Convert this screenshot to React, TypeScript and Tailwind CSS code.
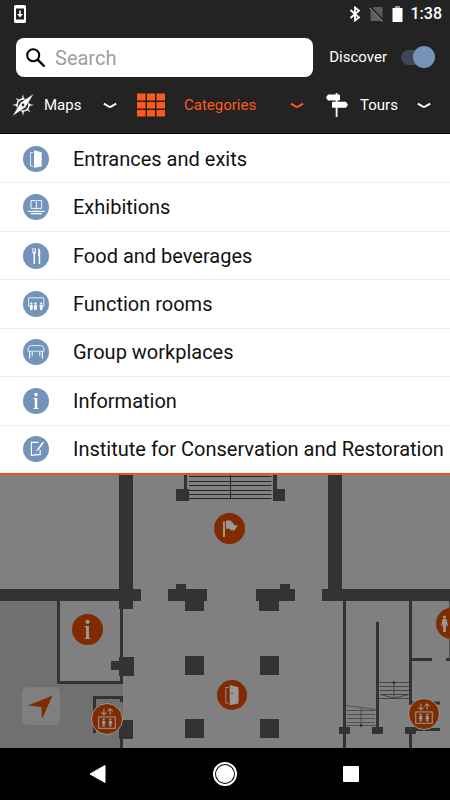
import React from "react";
import type { ReactNode } from "react";

const DoorShape = () => (
  <>
    <path d="M10 6.5H7.6V20H10" fill="none" stroke="currentColor" strokeWidth="0.8" />
    <path d="M11 4.3 18.7 6.3V20.4L11 21.8Z" fill="currentColor" />
  </>
);

const InfoShape = () => (
  <>
    <circle cx="13" cy="6.6" r="1.8" fill="currentColor" />
    <path d="M10.4 10H14.2V19.8L15.6 20.5V21H10.4V20.5L11.8 19.8V11.2L10.4 10.6Z" fill="currentColor" />
  </>
);

const LiftShape = () => (
  <g fill="none" stroke="currentColor" strokeWidth="1">
    <path d="M11.5 4.5V10.5M9 8 11.5 10.5 14 8M17.5 10.5V4.5M15 7 17.5 4.5 20 7" />
    <rect x="6.5" y="12.5" width="16" height="11" />
    <g fill="currentColor" stroke="none">
      <circle cx="11.3" cy="15" r="1.1" />
      <circle cx="17.7" cy="15" r="1.1" />
      <path d="M9.8 16.4H12.8V19.6H12.2V22H10.4V19.6H9.8ZM16.2 16.4H19.2V19.6H18.6V22H16.8V19.6H16.2Z" />
    </g>
  </g>
);

const categories: { label: string; icon: ReactNode }[] = [
  {
    label: "Entrances and exits",
    icon: <DoorShape />,
  },
  {
    label: "Exhibitions",
    icon: (
      <g fill="none" stroke="currentColor">
        <path d="M8 6.5H12L13.3 7.3 14.6 6.5H18.6V14.4H14.6L13.3 15.2 12 14.4H8ZM13.3 7.3V15" strokeWidth="0.9" />
        <path d="M5 17.4H21.6M7.8 19.6H18.8" strokeWidth="1.1" />
      </g>
    ),
  },
  {
    label: "Food and beverages",
    icon: (
      <g fill="currentColor">
        <path d="M9.4 5H10.1V9H10.8V5H11.5V9H12.2V5H12.9V9.5L12 11.4V20.4Q11.3 21.6 10.5 20.4V11.4L9.4 9.5Z" />
        <path d="M15.2 5.6Q17.2 5 17.2 8V20.6Q16.4 21.6 15.7 20.6V13H15.2Z" />
      </g>
    ),
  },
  {
    label: "Function rooms",
    icon: (
      <>
        <path d="M7 15H5.6V6.8H20.8V15H19.4" fill="none" stroke="currentColor" strokeWidth="0.8" />
        <g fill="currentColor">
          <circle cx="8.3" cy="12.6" r="1.2" />
          <circle cx="12.4" cy="12.6" r="1.2" />
          <circle cx="18.2" cy="12.6" r="1.2" />
          <path d="M6.6 14.2H10L9.4 19H7.2ZM10.7 14.2H14.1L13.5 19H11.3ZM16.5 14.2H19.9L19.3 19H17.1Z" />
        </g>
      </>
    ),
  },
  {
    label: "Group workplaces",
    icon: (
      <g fill="none" stroke="currentColor">
        <path d="M7.4 6.6H18.6Q19.6 6.6 20 7.6L21.2 11.2Q21.4 12.2 20.2 12.2H5.8Q4.6 12.2 4.8 11.2L6 7.6Q6.4 6.600 7.4 6.600Z" strokeWidth="0.8" />
        <path d="M6.6 12V19.5M9.2 13V16.8M16.8 13V16.8M19.4 12V19.5" strokeWidth="1.1" />
      </g>
    ),
  },
  {
    label: "Information",
    icon: <InfoShape />,
  },
  {
    label: "Institute for Conservation and Restoration",
    icon: (
      <g fill="none" stroke="currentColor">
        <path d="M15.5 6.4H8.4V19.4H11L12 18.6H17.2V14" strokeWidth="1.1" />
        <path d="M20.4 6 14.6 14" strokeWidth="1.6" />
        <path d="M14.8 13.4 13 15.4" strokeWidth="0.8" />
      </g>
    ),
  },
];

const Chevron = () => (
  <svg className="ml-auto h-2 w-3.5" viewBox="0 0 14 8" fill="none" stroke="currentColor" strokeWidth="1.9" aria-hidden="true">
    <path d="M.8 2.600 6 5.600Q7 6.100 8 5.600L13.200 2.600" />
  </svg>
);

function StatusBar() {
  return (
    <div className="flex h-7 items-center pr-2 pl-3.5 text-white">
      <svg className="h-[18px] w-3" viewBox="0 0 12 18" aria-hidden="true">
        <rect width="12" height="18" rx="1.5" fill="#fff" />
        <rect x="2" y="3.5" width="8" height="11" fill="#232323" />
        <path d="M5.2 5.5H6.8V9H9L6 12.5 3 9H5.2Z" fill="#fff" />
      </svg>
      <svg className="ml-auto h-4 w-3" viewBox="0 0 12 16" fill="none" stroke="currentColor" strokeWidth="1.8" aria-hidden="true">
        <path d="M1.500 4 10 11.500 6 14.500V1.500L10 4.500 1.500 12" />
      </svg>
      <svg className="ml-2 h-4 w-[15px]" viewBox="0 0 15 16" aria-hidden="true">
        <path d="M5 1H13.5V15H1.5V5Z" fill="#5d5d5d" />
        <path d="M.8.8 14.4 15" stroke="#232323" strokeWidth="2.6" />
        <path d="M.6 2 13.6 15.5" stroke="#777" strokeWidth="1.2" />
      </svg>
      <svg className="ml-2 h-4 w-[11px]" viewBox="0 0 11 16" aria-hidden="true">
        <path d="M3 0H8V2H10.5V16H.5V2H3Z" fill="#fff" />
        <path d="M3 0H8V2H3Z" fill="#999" />
      </svg>
      <span className="ml-2 text-base font-medium">1:38</span>
    </div>
  );
}

function Header() {
  return (
    <header className="border-b border-black bg-[#232323] text-white">
      <StatusBar />
      <div className="flex items-center pt-2.5 pr-[15px] pl-4">
        <label className="flex h-[39px] min-w-0 flex-1 items-center rounded-lg bg-white pl-2.5 text-black">
          <svg className="h-5 w-5 shrink-0" viewBox="0 0 20 20" fill="none" stroke="currentColor" strokeWidth="2" aria-hidden="true">
            <circle cx="7.2" cy="7.2" r="6" />
            <path d="M11.6 11.6 18.5 18.5" strokeWidth="2.4" />
          </svg>
          <input
            type="search"
            aria-label="Search"
            placeholder="Search"
            className="ml-[9px] min-w-0 flex-1 bg-transparent text-xl outline-none placeholder:text-[#9e9e9e]"
          />
        </label>
        <label htmlFor="discover" className="ml-4 text-[15px]">
          Discover
        </label>
        <input
          id="discover"
          type="checkbox"
          role="switch"
          defaultChecked
          className="relative ml-3.5 h-[15px] w-[34px] shrink-0 appearance-none rounded-full bg-[#3e4751] before:absolute before:-top-1 before:left-0 before:size-[22px] before:rounded-full before:bg-[#7393b7] checked:before:left-3"
        />
      </div>
      <nav className="flex h-14 items-center pr-[19px] pl-3 text-[15px]">
        <button type="button" className="mr-5 flex w-[105px] items-center">
          <svg className="h-6 w-[22px]" viewBox="0 0 22 24" aria-hidden="true">
            <circle cx="11" cy="12" r="6" fill="none" stroke="currentColor" strokeWidth="1.5" />
            <path
              d="M11 1 12 6H10ZM11 23 10 18H12ZM0 12 5 11V13ZM22 12 17 13V11ZM3.5 4.5 7.2 7 6 8.2ZM18.5 19.5 14.8 17 16 15.8Z"
              fill="currentColor"
            />
            <path d="M22 .5 13.5 14.5 0 23.5 8.5 9.5Z" fill="currentColor" stroke="#232323" strokeWidth="0.6" />
            <circle cx="11" cy="12" r="1.4" fill="#232323" />
          </svg>
          <span className="ml-2.5">Maps</span>
          <Chevron />
        </button>
        <button type="button" aria-expanded="true" className="flex w-[167px] items-center text-[#ff5a1e]">
          <svg className="h-6 w-7" viewBox="0 0 28 24" fill="currentColor" aria-hidden="true">
            <path d="M0 .5H8.5V7.5H0ZM10 .5H18V7.5H10ZM19.5 .5H28V7.5H19.5ZM0 9H8.5V15.5H0ZM10 9H18V15.5H10ZM19.5 9H28V15.5H19.5ZM0 17H8.5V23.5H0ZM10 17H18V23.5H10ZM19.5 17H28V23.5H19.5Z" />
          </svg>
          <span className="ml-[19px]">Categories</span>
          <Chevron />
        </button>
        <button type="button" className="ml-auto flex w-[105px] items-center">
          <svg className="h-6 w-[22px]" viewBox="0 0 22 24" fill="currentColor" aria-hidden="true">
            <path d="M9.7 0H11.5V1.5H13Q14 1.5 14 2.5V6.500Q14 7.500 13 7.500H11.500V8.700H20L22 11.700 20 14.700H11.500V24H9.700V14.700H7Q6 14.700 6 13.700V9.700Q6 8.700 7 8.700H9.700V7.500H2L0 4.500 2 1.500H9.700Z" />
          </svg>
          <span className="ml-3">Tours</span>
          <Chevron />
        </button>
      </nav>
    </header>
  );
}

function CategoryList() {
  return (
    <ul className="flex min-h-[341px] flex-col border-b-2 border-[#ff4d10] bg-white pt-px">
      {categories.map(({ label, icon }) => (
        <li key={label} className="flex flex-1 border-b border-[#ebebf0] last:border-b-0">
          <button type="button" className="flex flex-1 items-center gap-6 pl-[23px] text-left text-xl whitespace-nowrap text-[#111]">
            <svg className="size-[26px] shrink-0 text-white" viewBox="0 0 26 26" aria-hidden="true">
              <circle cx="13" cy="13" r="13" fill="#7394ba" />
              {icon}
            </svg>
            {label}
          </button>
        </li>
      ))}
    </ul>
  );
}

function Pin({ label, place, children }: { label: string; place: string; children: ReactNode }) {
  return (
    <button type="button" aria-label={label} className={`absolute rounded-full bg-[#802b00] text-[#999] ${place}`}>
      {children}
    </button>
  );
}

function FloorPlan() {
  return (
    <svg className="absolute inset-0 h-full w-full" viewBox="0 475 450 273" preserveAspectRatio="xMidYMin slice" aria-hidden="true">
      <path d="M0 601H58V683H123V748H0Z" fill="#707070" />
      <g fill="#333">
        <path d="M119 475H133V589H141V601H133V609H119V601H0V589H119Z" />
        <path d="M328 475H342V589H450V601H322V589H328Z" />
        <path d="M184 475H187V489H189V501H176V489H184ZM273 475H277V489H285V501H273Z" />
        <path d="M176 584H186V589H207V601H204V611H185V601H168V589H176Z" />
        <path d="M280 584H290V589H295V601H279V611H259V601H256V589H280Z" />
        <path d="M185 656H204V675H185ZM260 656H279V675H260ZM185 719H204V738H185ZM260 719H279V738H260Z" />
        <path d="M119 657H134V676H119V670H111V661H119ZM119 720H133V739H119Z" />
        <path d="M339 727H350V734H339ZM372 727H383V734H372ZM405 727H416V734H405Z" />
      </g>
      <g fill="none" stroke="#333" strokeWidth="3">
        <path d="M58.5 601V682.5H121.5V601M94.5 733V697.5H121.5V702M121.5 738V748" />
        <path d="M344.5 601V748M377.5 622V728M410.5 601V705M410.5 734V748" />
        <path d="M410 659.5H432M446 659.5H450M410 703H440M415 729.5H440" />
      </g>
      <path d="M189 476.5H271.5M189 481.5H271.5M189 485.5H271.5M189 490.5H271.5M189 494.5H271.5M189 498.5H271.5M230.5 475V498.5" stroke="#262626" fill="none" />
      <g fill="none" stroke="#444">
        <path d="M379 682.5H409M380 686.5H409M380 690.5H409M380 694.5H409M379 698.5H409M380 694.5 394 698 409 694.5M394 682V698" />
        <path d="M346 705.5 376 709.5M347 710.5H375M347 714.5H375M347 718.5H375M347 722.5H375M346 725.5H376M361 708V725M449.5 601V658" strokeWidth="0.8" />
      </g>
      <circle cx="394" cy="682.5" r="1.5" fill="#333" />
      <circle cx="361" cy="725.5" r="1.5" fill="#333" />
    </svg>
  );
}

function MapView() {
  return (
    <main className="relative min-h-[273px] flex-1 overflow-hidden bg-[#808080]">
      <FloorPlan />
      <Pin label="Starting point" place="top-[38px] left-[214px] size-[31px]">
        <svg viewBox="0 0 31 31" aria-hidden="true">
          <path d="M9 8.5H11V24H9ZM12 8Q16 6 18.5 9.5 20.5 13.5 24 12L20.5 17.5Q17 18 15.5 16 13.5 15 12 16.5Z" fill="currentColor" />
        </svg>
      </Pin>
      <Pin label="Information" place="top-[139px] left-[72px] size-[31px]">
        <svg viewBox="0 0 26 26" aria-hidden="true">
          <InfoShape />
        </svg>
      </Pin>
      <Pin label="Toilets" place="top-[133px] left-[436px] size-[31px]">
        <svg viewBox="0 0 31 31" fill="currentColor" aria-hidden="true">
          <circle cx="8.5" cy="9" r="1.6" />
          <path d="M6.5 11H10.5L12 17.5 11 18 10.2 15.5V19H9.900V24H7.100V19H6.800V15.500L6 18 5 17.500Z" />
        </svg>
      </Pin>
      <Pin label="Entrance" place="top-[205px] left-[217px] size-[30px]">
        <svg viewBox="0 0 26 26" aria-hidden="true">
          <DoorShape />
          <circle cx="13" cy="11.5" r="0.7" fill="#802b00" />
        </svg>
      </Pin>
      <Pin label="Lift, west" place="top-[228px] left-[91px] size-8 border border-[#999]">
        <svg viewBox="0 0 29 29" aria-hidden="true">
          <LiftShape />
        </svg>
      </Pin>
      <Pin label="Lift, east" place="top-[223px] left-[408px] size-8 border border-[#999]">
        <svg viewBox="0 0 29 29" aria-hidden="true">
          <LiftShape />
        </svg>
      </Pin>
      <button type="button" aria-label="My location" className="absolute top-[212px] left-[22px] size-[38px] rounded-md bg-[#7f7f7f]">
        <svg viewBox="0 0 38 38" aria-hidden="true">
          <path d="M30.5 8.5 20 32 19.5 20 6 18.5Z" fill="#802b00" />
        </svg>
      </button>
    </main>
  );
}

function NavigationBar() {
  return (
    <footer className="flex h-[52px] items-center justify-center gap-[101px] bg-black">
      <button type="button" aria-label="Back">
        <svg className="h-5 w-[26px]" viewBox="0 0 26 20" aria-hidden="true">
          <path d="M19 1.5V18.5L4 10Z" fill="#fff" stroke="#fff" strokeLinejoin="round" />
        </svg>
      </button>
      <button type="button" aria-label="Home" className="flex size-6 items-center justify-center rounded-full border-2 border-white">
        <span className="size-[18px] rounded-full bg-white" />
      </button>
      <button type="button" aria-label="Recent apps" className="flex w-[26px] justify-center">
        <span className="size-4 rounded-[1px] bg-white" />
      </button>
    </footer>
  );
}

export default function App() {
  return (
    <div className="flex min-h-screen flex-col overflow-x-hidden bg-black font-[Roboto,sans-serif]">
      <Header />
      <CategoryList />
      <MapView />
      <NavigationBar />
    </div>
  );
}
